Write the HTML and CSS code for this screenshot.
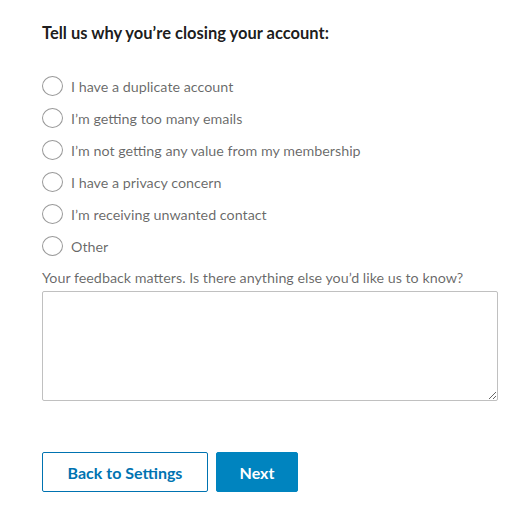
FILE: index.html
```html
<!DOCTYPE html>
<html>
<head>
<meta charset="utf-8">
<link rel="stylesheet" href="styles.css">
</head>
<body>
<form class="page">
  <h1 class="title">Tell us why you’re closing your account:</h1>
  <div class="options">
    <label class="option"><input type="radio" name="r"><span class="circle"></span><span>I have a duplicate account</span></label>
    <label class="option"><input type="radio" name="r"><span class="circle"></span><span>I’m getting too many emails</span></label>
    <label class="option"><input type="radio" name="r"><span class="circle"></span><span>I’m not getting any value from my membership</span></label>
    <label class="option"><input type="radio" name="r"><span class="circle"></span><span>I have a privacy concern</span></label>
    <label class="option"><input type="radio" name="r"><span class="circle"></span><span>I’m receiving unwanted contact</span></label>
    <label class="option"><input type="radio" name="r"><span class="circle"></span><span>Other</span></label>
  </div>
  <label class="feedback-label" for="fb">Your feedback matters. Is there anything else you’d like us to know?</label>
  <textarea id="fb" class="feedback"></textarea>
  <div class="actions">
    <button type="button" class="btn btn-secondary">Back to Settings</button>
    <button type="button" class="btn btn-primary">Next</button>
  </div>
</form>
</body>
</html>
```
FILE: styles.css
```css
html, body {
  margin: 0;
  padding: 0;
  background: #ffffff;
}
body {
  font-family: Lato, "Liberation Sans", sans-serif;
  color: rgba(0,0,0,0.6);
}
.page {
  padding: 22px 21px 0 42px;
  display: flex;
  flex-direction: column;
}
.title {
  margin: 0;
  font-size: 16.5px;
  line-height: 22px;
  font-weight: 700;
  color: rgba(0,0,0,0.9);
}
.options {
  margin-top: 32px;
  display: flex;
  flex-direction: column;
  gap: 12px;
}
.option {
  display: flex;
  align-items: center;
  gap: 8px;
  height: 20px;
  font-size: 14.3px;
  color: rgba(0,0,0,0.6);
  cursor: pointer;
}
.option input {
  display: none;
}
.circle {
  border: 1px solid #999999;
  border-radius: 50%;
  box-sizing: border-box;
  flex: none;
  width: 21px;
  height: 20px;
}
.feedback-label {
  margin-top: 12px;
  font-size: 14.3px;
  line-height: 20px;
  color: rgba(0,0,0,0.6);
}
.feedback {
  margin-top: 3px;
  width: 456px;
  height: 110px;
  box-sizing: border-box;
  border: 1px solid #c0c0c0;
  border-radius: 2px;
  font-family: inherit;
  font-size: 14px;
  resize: vertical;
}
.actions {
  margin-top: 51px;
  display: flex;
  gap: 8px;
}
.btn {
  font-family: inherit;
  font-size: 16px;
  font-weight: 700;
  height: 40px;
  box-sizing: border-box;
  border-radius: 2px;
  padding: 0 20px;
  cursor: pointer;
}
.btn-secondary {
  width: 166px;
  background: #ffffff;
  color: #0073b1;
  border: 1px solid #0073b1;
}
.btn-primary {
  width: 82px;
  background: #0084bf;
  color: #ffffff;
  border: 1px solid #0084bf;
}
```
